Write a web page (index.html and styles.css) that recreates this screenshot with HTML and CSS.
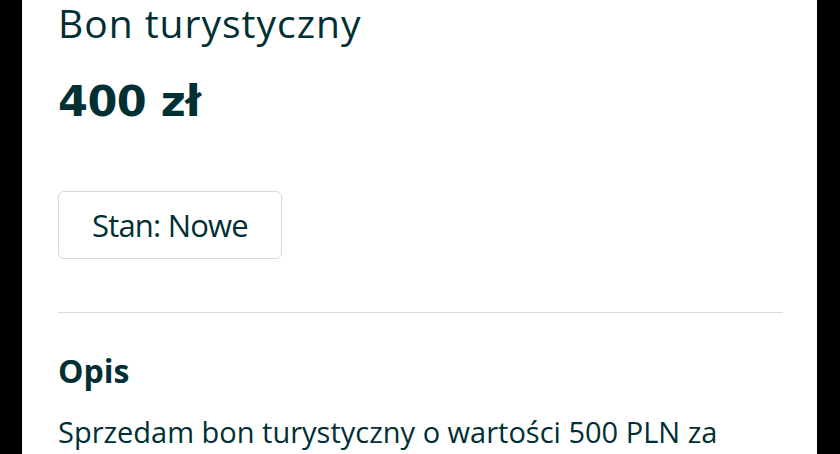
FILE: index.html
```html
<!DOCTYPE html>
<html lang="pl">
<head>
<meta charset="utf-8">
<link rel="stylesheet" href="styles.css">
</head>
<body>
<main class="page">
  <h1 class="title">Bon turystyczny</h1>
  <div class="price">400 zł</div>
  <div class="tags"><span class="tag">Stan: Nowe</span></div>
  <hr class="divider">
  <h2 class="section-title">Opis</h2>
  <p class="desc">Sprzedam bon turystyczny o wartości 500 PLN za</p>
</main>
</body>
</html>
```
FILE: styles.css
```css
html, body {
  margin: 0;
  padding: 0;
  background: #000;
  height: 100%;
  overflow: hidden;
}
.page {
  margin: 0 23px 0 22px;
  background: #fff;
  height: 454px;
  padding: 0 34px 0 36px;
  box-sizing: border-box;
  overflow: hidden;
  color: #002f34;
  font-family: "Open Sans", Lato, sans-serif;
}
.title {
  margin: 3px 0 0 0;
  font-size: 39px;
  line-height: 39px;
  font-weight: 400;
  letter-spacing: 1px;
}
.price {
  margin-top: 38px;
  font-family: "DejaVu Sans", "Open Sans", sans-serif;
  font-size: 43px;
  line-height: 43px;
  font-weight: 700;
  letter-spacing: -0.5px;
}
.tags {
  margin-top: 68px;
  display: flex;
}
.tag {
  display: inline-flex;
  align-items: center;
  height: 68px;
  box-sizing: border-box;
  padding: 0 33px;
  border: 1px solid #d6dbdc;
  border-radius: 6px;
  font-size: 31px;
  line-height: 32px;
  letter-spacing: -0.8px;
}
.divider {
  margin: 53px 0 0 0;
  border: 0;
  height: 1px;
  background: #d8dcdd;
}
.section-title {
  margin: 42px 0 0 0;
  font-size: 32px;
  line-height: 32px;
  font-weight: 700;
}
.desc {
  margin: 30px 0 0 0;
  font-size: 29px;
  line-height: 29px;
}
```
